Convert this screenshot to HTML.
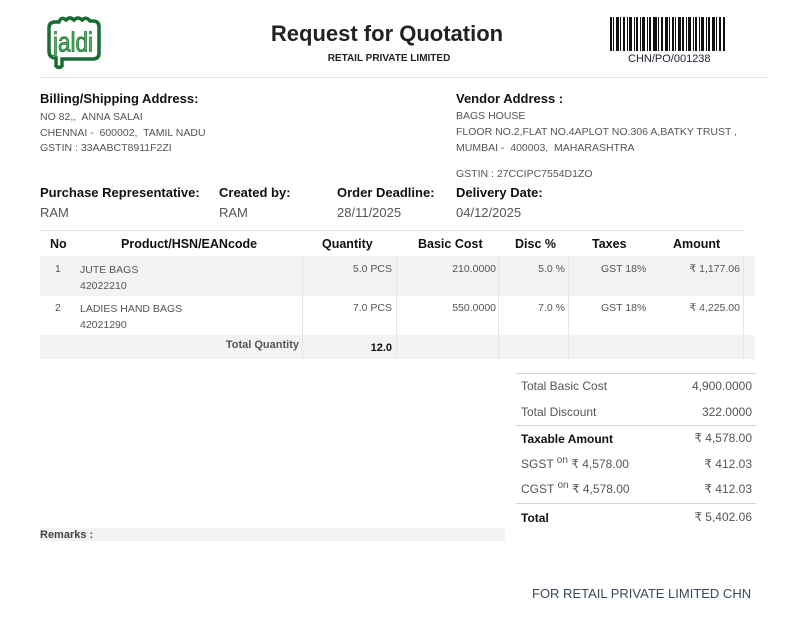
<!DOCTYPE html>
<html><head><meta charset="utf-8"><style>
*{margin:0;padding:0;box-sizing:border-box}
body{width:793px;height:633px;background:#fff;font-family:"Liberation Sans",sans-serif;color:#555;position:relative;overflow:hidden}
.a{position:absolute;white-space:nowrap}
.b{font-weight:bold;color:#111}
.s{font-size:10.5px;color:#555}
.h{font-size:13px;font-weight:bold;color:#111}
.v{font-size:13px;color:#555}
.r{text-align:right}
</style></head><body>
<svg class="a" style="left:44px;top:14px" width="58" height="58" viewBox="0 0 58 58">
<path d="M5 14 q0-6 6-6 h4 q2-6 7-2 q4-4 8 0 q4-4 8 0 q4-4 8 1 h3 q6 0 6 6 v26 q0 6-6 6 h-31 v7 q-3 3-6 0 v-8 q-7 0-7-7z" fill="#fff" stroke="#1a6b34" stroke-width="3.5"/>
<text x="29" y="37" text-anchor="middle" font-family="Liberation Sans" font-size="25" fill="#49b556" stroke="#1a6b34" stroke-width="0.7" transform="scale(1,1.1) translate(0,-3)" textLength="40" lengthAdjust="spacingAndGlyphs">jaldi</text>
</svg>
<div class="a b" style="left:0;width:774px;top:21px;text-align:center;font-size:22px;color:#222">Request for Quotation</div>
<div class="a b" style="left:0;width:778px;top:53px;text-align:center;font-size:10px;color:#222">RETAIL PRIVATE LIMITED</div>
<svg class="a" style="left:610px;top:17px" width="115" height="34">
<g fill="#111">
<rect x="0" width="2" height="34"/><rect x="3" width="1" height="34"/><rect x="6" width="3" height="34"/><rect x="10" width="1" height="34"/><rect x="13" width="2" height="34"/><rect x="17" width="1" height="34"/><rect x="19" width="3" height="34"/><rect x="24" width="1" height="34"/><rect x="26" width="2" height="34"/><rect x="30" width="1" height="34"/><rect x="32" width="3" height="34"/><rect x="37" width="1" height="34"/><rect x="39" width="2" height="34"/><rect x="43" width="4" height="34"/><rect x="48" width="1" height="34"/><rect x="51" width="2" height="34"/><rect x="55" width="3" height="34"/><rect x="59" width="1" height="34"/><rect x="62" width="2" height="34"/><rect x="65" width="1" height="34"/><rect x="68" width="3" height="34"/><rect x="72" width="2" height="34"/><rect x="76" width="1" height="34"/><rect x="78" width="3" height="34"/><rect x="83" width="1" height="34"/><rect x="85" width="2" height="34"/><rect x="89" width="1" height="34"/><rect x="91" width="3" height="34"/><rect x="96" width="1" height="34"/><rect x="98" width="2" height="34"/><rect x="102" width="3" height="34"/><rect x="106" width="1" height="34"/><rect x="109" width="2" height="34"/><rect x="113" width="2" height="34"/>
</g></svg>
<div class="a" style="left:628px;top:53px;font-size:11px;color:#223">CHN/PO/001238</div>
<div class="a" style="left:40px;top:77px;width:728px;height:1px;background:#e3e3e3"></div>

<div class="a h" style="left:40px;top:91px">Billing/Shipping Address:</div>
<div class="a s" style="left:40px;top:110px;line-height:15.5px">NO 82,,&nbsp; ANNA SALAI<br>CHENNAI -&nbsp; 600002,&nbsp; TAMIL NADU<br>GSTIN : 33AABCT8911F2ZI</div>
<div class="a h" style="left:456px;top:91px">Vendor Address :</div>
<div class="a s" style="left:456px;top:108px;line-height:16px">BAGS HOUSE<br>FLOOR NO.2,FLAT NO.4APLOT NO.306 A,BATKY TRUST ,<br>MUMBAI -&nbsp; 400003,&nbsp; MAHARASHTRA</div>
<div class="a s" style="left:456px;top:168px">GSTIN : 27CCIPC7554D1ZO</div>

<div class="a h" style="left:40px;top:185px">Purchase Representative:</div>
<div class="a h" style="left:219px;top:185px">Created by:</div>
<div class="a h" style="left:337px;top:185px">Order Deadline:</div>
<div class="a h" style="left:456px;top:185px">Delivery Date:</div>
<div class="a v" style="left:40px;top:205px">RAM</div>
<div class="a v" style="left:219px;top:205px">RAM</div>
<div class="a v" style="left:337px;top:205px">28/11/2025</div>
<div class="a v" style="left:456px;top:205px">04/12/2025</div>

<div class="a" style="left:40px;top:230px;width:704px;height:1px;background:#dde2e6"></div>
<div class="a" style="left:40px;top:256px;width:715px;height:40px;background:#f4f2f3"></div>
<div class="a" style="left:40px;top:335px;width:715px;height:24px;background:#f4f2f3"></div>
<div class="a" style="left:302px;top:256px;width:1px;height:103px;background:#e6e4e5"></div>
<div class="a" style="left:396px;top:256px;width:1px;height:103px;background:#e6e4e5"></div>
<div class="a" style="left:498px;top:256px;width:1px;height:103px;background:#e6e4e5"></div>
<div class="a" style="left:568px;top:256px;width:1px;height:103px;background:#e6e4e5"></div>
<div class="a" style="left:743px;top:256px;width:1px;height:103px;background:#e6e4e5"></div>

<div class="a b" style="left:50px;top:237px;font-size:12.5px">No</div>
<div class="a b" style="left:121px;top:237px;font-size:12.5px">Product/HSN/EANcode</div>
<div class="a b" style="left:322px;top:237px;font-size:12.5px">Quantity</div>
<div class="a b" style="left:418px;top:237px;font-size:12.5px">Basic Cost</div>
<div class="a b" style="left:515px;top:237px;font-size:12.5px">Disc %</div>
<div class="a b" style="left:592px;top:237px;font-size:12.5px">Taxes</div>
<div class="a b" style="left:673px;top:237px;font-size:12.5px">Amount</div>

<div class="a s" style="left:55px;top:263px">1</div>
<div class="a s" style="left:80px;top:263px;line-height:15.5px">JUTE BAGS<br>42022210</div>
<div class="a s r" style="left:300px;width:92px;top:263px">5.0 PCS</div>
<div class="a s r" style="left:400px;width:96px;top:263px">210.0000</div>
<div class="a s r" style="left:500px;width:65px;top:263px">5.0 %</div>
<div class="a s" style="left:601px;top:263px">GST 18%</div>
<div class="a s r" style="left:660px;width:80px;top:263px">₹ 1,177.06</div>

<div class="a s" style="left:55px;top:302px">2</div>
<div class="a s" style="left:80px;top:302px;line-height:15.5px">LADIES HAND BAGS<br>42021290</div>
<div class="a s r" style="left:300px;width:92px;top:302px">7.0 PCS</div>
<div class="a s r" style="left:400px;width:96px;top:302px">550.0000</div>
<div class="a s r" style="left:500px;width:65px;top:302px">7.0 %</div>
<div class="a s" style="left:601px;top:302px">GST 18%</div>
<div class="a s r" style="left:660px;width:80px;top:302px">₹ 4,225.00</div>

<div class="a r" style="left:150px;width:149px;top:339px;font-size:11px;font-weight:bold;color:#555">Total Quantity</div>
<div class="a b r" style="left:330px;width:62px;top:342px;font-size:11px">12.0</div>

<div class="a" style="left:516px;top:373px;width:240px;height:1px;background:#cfd5da"></div>
<div class="a" style="left:516px;top:425px;width:240px;height:1px;background:#cfd5da"></div>
<div class="a" style="left:516px;top:503px;width:240px;height:1px;background:#cfd5da"></div>
<div class="a" style="left:521px;top:379px;font-size:12px;color:#555">Total Basic Cost</div>
<div class="a r" style="left:640px;width:112px;top:379px;font-size:12px;color:#555">4,900.0000</div>
<div class="a" style="left:521px;top:405px;font-size:12px;color:#555">Total Discount</div>
<div class="a r" style="left:640px;width:112px;top:405px;font-size:12px;color:#555">322.0000</div>
<div class="a b" style="left:521px;top:432px;font-size:12px">Taxable Amount</div>
<div class="a r" style="left:640px;width:112px;top:431px;font-size:12px;color:#555">₹ 4,578.00</div>
<div class="a" style="left:521px;top:455px;font-size:12px;color:#555">SGST <sup style="font-size:10px">on</sup> ₹ 4,578.00</div>
<div class="a r" style="left:640px;width:112px;top:457px;font-size:12px;color:#555">₹ 412.03</div>
<div class="a" style="left:521px;top:480px;font-size:12px;color:#555">CGST <sup style="font-size:10px">on</sup> ₹ 4,578.00</div>
<div class="a r" style="left:640px;width:112px;top:482px;font-size:12px;color:#555">₹ 412.03</div>
<div class="a b" style="left:521px;top:511px;font-size:12px">Total</div>
<div class="a r" style="left:640px;width:112px;top:510px;font-size:12px;color:#555">₹ 5,402.06</div>

<div class="a" style="left:40px;top:528px;width:465px;height:13px;background:#f4f2f3"></div>
<div class="a" style="left:40px;top:529px;font-size:11px;font-weight:bold;color:#444">Remarks :</div>

<div class="a" style="left:532px;top:586px;font-size:13px;color:#3a4a5a">FOR RETAIL PRIVATE LIMITED CHN</div>
</body></html>
